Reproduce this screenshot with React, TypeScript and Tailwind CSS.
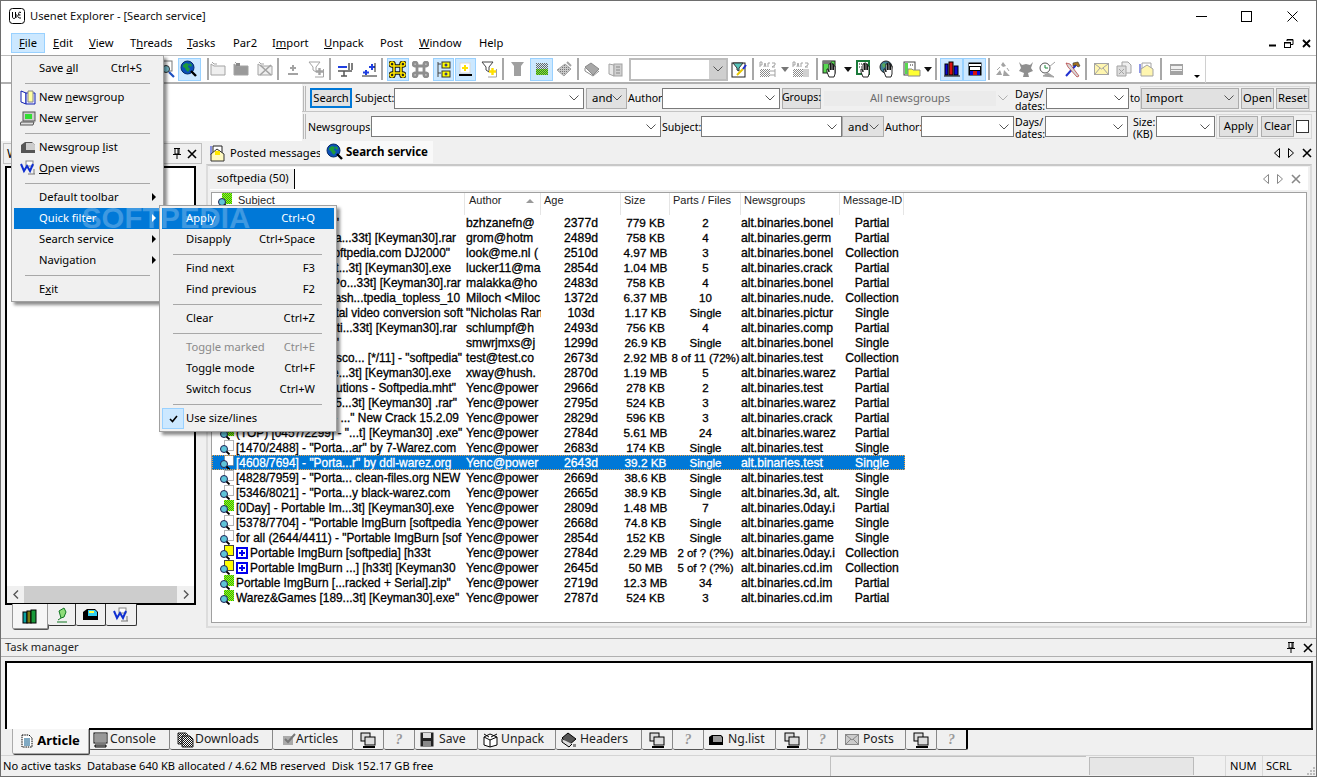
import React from "react";

const G = "#a3a3a3";
const S = ({ w = 16, h = 16, children, className = "" }: { w?: number; h?: number; children: React.ReactNode; className?: string }) => (
  <svg width={w} height={h} viewBox={`0 0 ${w} ${h}`} className={"shrink-0 block " + className} fill="none">{children}</svg>
);

const Globe = () => (
  <S w={18} h={18}>
    <circle cx="7.5" cy="7.5" r="6.5" fill="#0a50b8" stroke="#032a66" />
    <path d="M3 5l3-2 3 1-1 3 2 2-2 3-2-2-1-2-2-1zM10 3l2 2-1 2-2-2z" fill="#1c9a3c" />
    <path d="M11 11l5 5" stroke="#000" strokeWidth="2.4" />
  </S>
);
const DocSearch = () => (
  <S w={18} h={18}>
    <rect x="4" y="1" width="9" height="10" fill="#fff" stroke="#777" />
    <circle cx="7" cy="9" r="3.5" fill="#7cc6d8" stroke="#333" />
    <path d="M10 12l5 5" stroke="#1d4fc0" strokeWidth="2.2" />
  </S>
);
const Folder = ({ x }: { x?: "fill" | "cross" }) => (
  <S w={17} h={16}>
    <path d="M1 3l3 2h11v9H1z" fill={x === "fill" ? "#9a9a9a" : "#efefef"} stroke={G} />
    <path d="M2 1l2 2h3" stroke={G} />
    {x === "cross" && <path d="M3 4l11 10M14 4L3 14" stroke={G} strokeWidth="1.6" />}
    {x === "fill" && <rect x="3" y="2" width="4" height="3" fill="#888" />}
  </S>
);
const PlusLine = () => (
  <S w={12} h={12}><path d="M6 2v6M3 5h6" stroke={G} strokeWidth="2" /><path d="M1 11h10" stroke={G} strokeWidth="2" /></S>
);
const FunnelPlus = ({ c = G, p = G }: { c?: string; p?: string }) => (
  <S w={17} h={17}>
    <path d="M1 1h11L8 6v5L5 9V6z" fill="#fff" stroke={c === G ? G : "#444"} />
    <path d="M11.5 7v7M8 10.5h7" stroke={p} strokeWidth="2.4" />
    <path d="M15.5 8v8H7" stroke={G} />
  </S>
);
const Split = ({ plus }: { plus?: boolean }) => (
  <S w={17} h={17}>
    {plus ? (<>
      <path d="M5 9v5M2 11.5h6M11 3v6M8 6h6" stroke="#1f3fe0" strokeWidth="2" />
      <path d="M1 15h15M14 2v9" stroke="#222" />
    </>) : (<>
      <path d="M1 6h9" stroke="#1f3fe0" strokeWidth="2" />
      <path d="M1 10h14M12 2v7M15 2v7M7 10v5M4 15h6" stroke="#555" strokeWidth="1.5" />
    </>)}
  </S>
);
const Cmd = ({ on }: { on?: boolean }) => (
  <S w={17} h={17}>
    <path d="M5 5h7v7H5zM5 5V3.5A2 2 0 1 0 3.5 5H5M12 5V3.5A2 2 0 1 1 13.5 5H12M5 12v1.5A2 2 0 1 1 3.5 12H5M12 12v1.5A2 2 0 1 0 13.5 12H12" stroke={on ? "#111" : "#8e8e8e"} strokeWidth={on ? 3.4 : 2.8} />
    {on && <path d="M5 5h7v7H5zM5 5V3.5A2 2 0 1 0 3.5 5H5M12 5V3.5A2 2 0 1 1 13.5 5H12M5 12v1.5A2 2 0 1 1 3.5 12H5M12 12v1.5A2 2 0 1 0 13.5 12H12" stroke="#ffe600" strokeWidth="1.6" />}
  </S>
);
const Boxes = () => (
  <S w={14} h={17}>
    <path d="M1 1v15M1 3h3M1 12h3" stroke="#444" />
    <rect x="5" y="1" width="8" height="6" fill="#ffff00" stroke="#333" />
    <rect x="5" y="10" width="8" height="6" fill="#ffff00" stroke="#333" />
    <path d="M9 2.5v3M7.5 4h3M9 11.5v3M7.5 13h3" stroke="#000099" />
  </S>
);
const PlusDoc = () => (
  <S w={15} h={15}>
    <rect x="2" y="1" width="10" height="10" fill="#fff" stroke="#d8d8d8" />
    <path d="M7 3v6M4 6h6" stroke="#ffe000" strokeWidth="2" />
    <path d="M1 13h13" stroke="#000" strokeWidth="2" />
  </S>
);
const FunnelDoc = () => (
  <S w={15} h={16}><path d="M1 1h13l-3 4v10H4V5z" fill="#a0a0a0" /></S>
);
const DitherBox = () => (
  <S w={12} h={12}>
    <defs>
      <pattern id="gm" width="2" height="2" patternUnits="userSpaceOnUse"><rect width="2" height="2" fill="#9adf30" /><rect width="1" height="1" fill="#2a8a2a" /><rect x="1" y="1" width="1" height="1" fill="#2a8a2a" /></pattern>
      <pattern id="gk" width="2" height="2" patternUnits="userSpaceOnUse"><rect width="2" height="2" fill="#cfe8f8" /><rect width="1" height="1" fill="#666" /><rect x="1" y="1" width="1" height="1" fill="#666" /></pattern>
    </defs>
    <rect width="12" height="6" fill="url(#gk)" />
    <rect y="6" width="12" height="6" fill="url(#gm)" />
  </S>
);
const Pack = () => (
  <S w={17} h={16}>
    <defs><pattern id="dg" width="2" height="2" patternUnits="userSpaceOnUse"><rect width="2" height="2" fill="#c8c8c8" /><rect width="1" height="1" fill="#777" /></pattern></defs>
    <path d="M1 9l8-6 6 5-7 7z" fill="url(#dg)" stroke={G} /><path d="M11 1l4 4" stroke={G} strokeWidth="2" />
  </S>
);
const BookG = () => (
  <S w={16} h={15}><path d="M1 5l6-4 8 6-6 6z" fill="#a8a8a8" stroke="#8a8a8a" /><path d="M1 6v3l8 5 6-5" stroke="#8a8a8a" /></S>
);
const PagesG = () => (
  <S w={15} h={15}><path d="M1 2l5 1v11l-5-2z" fill="#e8e8e8" stroke={G} /><rect x="6" y="2" width="8" height="12" fill="#d0d0d0" stroke={G} /><path d="M8 5h4M8 8h4M8 11h4" stroke="#888" /></S>
);
const Edit = () => (
  <S w={17} h={17}>
    <rect x="1" y="2" width="13" height="14" fill="#fff" stroke="#222" />
    <path d="M2 2h10L8 7v3L6 9V7z" fill="#58c6bc" stroke="#333" />
    <path d="M6 14l6-6" stroke="#e8c800" strokeWidth="2" /><path d="M12 8l3-4" stroke="#2030d0" strokeWidth="2" />
  </S>
);
const Par = ({ alt }: { alt?: boolean }) => (
  <S w={18} h={17}>
    <defs><pattern id="dp" width="2" height="2" patternUnits="userSpaceOnUse"><rect width="1" height="1" fill="#8a8a8a" /><rect x="1" y="1" width="1" height="1" fill="#8a8a8a" /></pattern></defs>
    <path d="M1 6V1h2v3H1M5 6l1-4 1 4M9 6V2h2M13 2h3v2l-3 2h3" stroke={G} />
    <rect x="1" y="8" width="10" height="8" fill="url(#dp)" />
    {alt ? <path d="M12 8v8M14 8v8M16 8v8" stroke={G} /> : <path d="M11 10h5M11 14h5M16 8v8" stroke={G} />}
  </S>
);
const Caret = ({ c = "#555" }: { c?: string }) => (
  <S w={8} h={5}><path d="M0 0h8L4 5z" fill={c} /></S>
);
const Hand = ({ kind }: { kind: number }) => (
  <S w={18} h={18}>
    {kind === 0 && <><rect x="1" y="1" width="12" height="12" fill="#58d850" stroke="#222" /><rect x="1" y="1" width="8" height="3" fill="#777" /></>}
    {kind === 1 && <><rect x="1" y="1" width="12" height="13" fill="#fff" stroke="#1a7a3a" strokeWidth="2" /><path d="M3 4h8M3 7h4" stroke="#222" strokeDasharray="1 1" /></>}
    {kind === 2 && <><circle cx="7" cy="7" r="6" fill="#3f7f9a" stroke="#222" /><path d="M3 4l3-1 1 3-3 2z" fill="#58a85a" /></>}
    <path d="M7 17l-2-5V9l1 0 1 3V4h1.5v6V3h1.5v7V4h1.5v6V6h1.5v8l-1 3z" fill="#fff" stroke="#111" strokeWidth=".9" />
  </S>
);
const FilesY = () => (
  <S w={18} h={16}>
    <rect x="1" y="1" width="11" height="13" fill="#fff" stroke="#444" />
    <rect x="2" y="2" width="3" height="11" fill="#58d850" />
    <path d="M7 4h4" stroke="#222" strokeDasharray="1 1" />
    <path d="M5 8h4l1 1h7v6H5z" fill="#ffff33" stroke="#888" />
  </S>
);
const Bars = () => (
  <S w={16} h={16}>
    <rect x="1" y="3" width="3" height="11" fill="#0a0ad8" stroke="#000" /><rect x="5" y="1" width="4" height="13" fill="#d81010" stroke="#000" /><rect x="10" y="5" width="4" height="9" fill="#0a0ad8" stroke="#000" /><path d="M0 15h16" stroke="#000" />
  </S>
);
const Win = () => (
  <S w={14} h={14}>
    <rect x=".5" y=".5" width="13" height="13" fill="#000" />
    <rect x="1" y="2" width="12" height="2" fill="#fff" /><rect x="2" y="5" width="10" height="3" fill="#fff" />
    <rect x="2" y="9" width="10" height="4" fill="#0a0ad8" /><rect x="5" y="9" width="4" height="4" fill="#d81010" />
  </S>
);
const Grey1 = () => (<S w={18} h={17}><path d="M9 1l3 4-3 1-2-2zM2 14l4-5 2 5zM10 9l6 6H9z" fill={G} /><path d="M3 9l3-3M13 7l2 3" stroke={G} /></S>);
const Grey2 = () => (<S w={16} h={17}><path d="M1 1l3 3 4-1 4 1 3-3-2 6 2 3-5 2 1 4H5l1-4-5-2 2-3z" fill="#8f8f8f" /></S>);
const Clock = () => (<S w={18} h={17}><circle cx="6" cy="7" r="5" fill="#fff" stroke="#555" /><path d="M6 4v3h3" stroke="#1a8a3a" /><path d="M10 6l6-5M4 15l5-3 6 4z" fill={G} stroke={G} /></S>);
const Tools = () => (<S w={17} h={17}><path d="M2 15L12 4" stroke="#2030d0" strokeWidth="2" /><path d="M2 2l4 1 9 12-2 1L4 6z" fill="#d8d8d8" stroke="#b03030" strokeWidth=".7" /><path d="M9 2l5-1 2 4-2 1-2-2-3 1z" fill="#a07020" stroke="#333" strokeWidth=".6" /></S>);
const MailG = () => (<S w={15} h={12}><rect x=".5" y=".5" width="14" height="11" fill="#fff6b0" stroke={G} /><path d="M1 1l6.5 5L14 1M1 11l5-6M14 11L9 5" stroke={G} /></S>);
const DocsG = () => (<S w={16} h={16}><path d="M6 1h6l3 3v8H6z" fill="#eee" stroke={G} /><path d="M1 5h9v10H1z" fill="#ddd" stroke={G} /><path d="M3 8l5 5M8 8l-5 5" stroke={G} /></S>);
const PostG = () => (<S w={16} h={16}><path d="M1 3v9" stroke="#2030d0" /><path d="M3 2h9v6H3z" fill="#fff" stroke={G} /><path d="M2 8l6-4 6 4v7H2z" fill="#fff6b0" stroke={G} /></S>);
const WinG = () => (<S w={13} h={11}><rect width="13" height="11" fill={G} /><rect x="1" y="2" width="11" height="3" fill="#f0f0f0" /><rect x="1" y="6" width="11" height="1" fill="#f0f0f0" /></S>);

const Sep = () => <div className="w-[2px] bg-[#a8a8a8] h-[22px]" />;

function Chev({ c = "#555" }: { c?: string }) {
  return <svg width="10" height="6" viewBox="0 0 10 6" className="block shrink-0" fill="none"><path d="M.5.5L5 5 9.5.5" stroke={c} /></svg>;
}

type T = { c: number; w?: number; on?: boolean; el: React.ReactNode };
const tools: T[] = [
  { c: 168, el: <DocSearch /> }, { c: 189, w: 23, on: true, el: <Globe /> }, { c: 208, w: 2, el: <Sep /> },
  { c: 218, el: <Folder /> }, { c: 241, el: <Folder x="fill" /> }, { c: 265, el: <Folder x="cross" /> }, { c: 278, w: 2, el: <Sep /> },
  { c: 293, el: <PlusLine /> }, { c: 316, el: <FunnelPlus /> }, { c: 330, w: 2, el: <Sep /> },
  { c: 345, el: <Split /> }, { c: 369, el: <Split plus /> }, { c: 382, w: 2, el: <Sep /> },
  { c: 397.5, w: 22, on: true, el: <Cmd on /> }, { c: 420, el: <Cmd /> }, { c: 443.5, w: 21, on: true, el: <Boxes /> }, { c: 465.5, w: 21, on: true, el: <PlusDoc /> },
  { c: 489, el: <FunnelPlus c="#333" p="#ffe000" /> }, { c: 503, w: 2, el: <Sep /> },
  { c: 517, el: <FunnelDoc /> }, { c: 541.5, w: 23, on: true, el: <DitherBox /> }, { c: 564, el: <Pack /> }, { c: 578, w: 2, el: <Sep /> },
  { c: 592, el: <BookG /> }, { c: 615, el: <PagesG /> },
  { c: 678.5, w: 99, el: (
    <div className="w-[99px] h-[23px] flex border-2 border-[#bdbdbd] bg-white items-stretch box-border">
      <div className="flex-1" />
      <div className="w-[17px] bg-[#cfcfcf] flex items-center justify-center"><Chev /></div>
    </div>
  ) },
  { c: 739, el: <Edit /> }, { c: 753, w: 2, el: <Sep /> },
  { c: 768, el: <Par /> }, { c: 785, w: 8, el: <Caret c="#777" /> }, { c: 801, el: <Par alt /> }, { c: 817, w: 2, el: <Sep /> },
  { c: 831, el: <Hand kind={0} /> }, { c: 847.5, w: 8, el: <Caret c="#111" /> }, { c: 865, el: <Hand kind={1} /> },
  { c: 888, el: <Hand kind={2} /> }, { c: 912, el: <FilesY /> }, { c: 927.5, w: 8, el: <Caret c="#111" /> }, { c: 936, w: 2, el: <Sep /> },
  { c: 951.5, w: 23, on: true, el: <Bars /> }, { c: 974.5, w: 23, on: true, el: <Win /> }, { c: 989, w: 2, el: <Sep /> },
  { c: 1003, el: <Grey1 /> }, { c: 1026, el: <Grey2 /> }, { c: 1048, el: <Clock /> }, { c: 1072, el: <Tools /> }, { c: 1086, w: 2, el: <Sep /> },
  { c: 1101, el: <MailG /> }, { c: 1124, el: <DocsG /> }, { c: 1147, el: <PostG /> }, { c: 1161, w: 2, el: <Sep /> },
  { c: 1176, el: <WinG /> },
];

function Toolbar() {
  let end = 1;
  return (
    <div className="h-[29px] shrink-0 border-t border-b-2 border-t-[#bdbdbd] border-b-[#b0b0b0] bg-white flex items-center">
      {tools.map((t, i) => {
        const w = t.w ?? 20;
        const left = t.c - w / 2;
        const m = left - end;
        end = left + w;
        return (
          <div key={i} style={{ marginLeft: m, width: w }} className={"h-[23px] shrink-0 flex items-center justify-center box-border " + (t.on ? "bg-[#cce8ff] border border-[#99d1ff]" : "")}>
            {t.el}
          </div>
        );
      })}
      <div className="ml-[8px] w-[8px] h-[23px] flex items-end pb-[3px]"><div className="w-0 h-0 border-x-[3px] border-x-transparent border-t-[3px] border-t-black" /></div>
      <div className="ml-[3px] w-px h-[27px] bg-[#d0d0d0]" />
    </div>
  );
}

const Combo = ({ w, children, grey }: { w: string; children?: React.ReactNode; grey?: boolean }) => (
  <div className={w + " h-[21px] shrink-0 box-border border flex items-center justify-between pl-[3px] pr-[4px] text-[11.4px] " + (grey ? "bg-[#e1e1e1] border-[#adadad]" : "bg-white border-[#7a7a7a]")}>
    <span className="whitespace-nowrap">{children}</span><Chev />
  </div>
);
const Btn = ({ w, children }: { w: string; children: React.ReactNode }) => (
  <div className={w + " h-[21px] shrink-0 box-border border border-[#adadad] bg-[#e1e1e1] flex items-center justify-center text-[11.2px]"}>{children}</div>
);
const Lab = ({ w, children }: { w: string; children: React.ReactNode }) => (
  <div className={w + " shrink-0 text-[10.6px] leading-[12px] text-black whitespace-nowrap"}>{children}</div>
);
const Two = ({ w, a, b }: { w: string; a: string; b: string }) => (
  <div className={w + " shrink-0 mt-[3px] text-[10.6px] leading-[12px] text-black whitespace-nowrap flex flex-col"}><span>{a}</span><span>{b}</span></div>
);
const Grip = () => <div className="w-[3px] h-[25px] mx-[1px] border-l border-r border-[#b8b8b8] shrink-0" />;

function SearchBars() {
  return (
    <div className="h-[57px] shrink-0 flex bg-[#f0f0f0]">
      <div className="w-[301px] bg-white shrink-0" />
      <div className="flex-1 flex flex-col">
        <div className="h-[28px] flex items-center border-b border-[#c4c4c4] pt-[1px]">
          <Grip />
          <div className="ml-[3px] w-[42px] h-[20px] shrink-0 box-border border-2 border-[#0078d7] bg-[#e1e1e1] flex items-center justify-center text-[11.2px]">Search</div>
          <div className="w-[3px]" />
          <Lab w="w-[39px]">Subject:</Lab>
          <Combo w="w-[190px]" />
          <div className="w-[2px]" />
          <Combo w="w-[41px]" grey><span className="pl-[2px]">and</span></Combo>
          <div className="w-[1px]" />
          <Lab w="w-[33px]">Author:</Lab>
          <div className="w-[1px]" />
          <Combo w="w-[118px]" />
          <div className="w-[2px]" />
          <Btn w="w-[39px]"><span className="text-[10.6px]">Groups:</span></Btn>
          <div className="w-[1px]" />
          <div className="w-[192px] h-[21px] shrink-0 flex items-center text-[#6d6d6d] text-[11.2px] pr-[6px] pl-[2px]">
            <div className="w-[172px] h-[15px] bg-[#ebebeb] flex items-center justify-center">All newsgroups</div>
            <div className="ml-auto"><Chev c="#b0b0b0" /></div>
          </div>
          <div className="w-[1px]" />
          <Two w="w-[31px]" a="Days/" b="dates:" />
          <Combo w="w-[83px]" />
          <div className="w-[1px]" />
          <Lab w="w-[10px]">to</Lab>
          <div className="h-[25px] flex items-center gap-[2px] border border-[#d8d8d8]">
            <Combo w="w-[98px]" grey><span className="pl-[1px]">Import</span></Combo>
            <Btn w="w-[33px]">Open</Btn>
            <Btn w="w-[33px]">Reset</Btn>
          </div>
        </div>
        <div className="h-[29px] flex items-center">
          <Grip />
          <div className="w-[1px]" />
          <Lab w="w-[63px]">Newsgroups:</Lab>
          <Combo w="w-[290px]" />
          <div className="w-[1px]" />
          <Lab w="w-[38px]">Subject:</Lab>
          <div className="w-[1px]" />
          <Combo w="w-[141px]" />
          <Combo w="w-[42px]" grey><span className="pl-[2px]">and</span></Combo>
          <div className="w-[1px]" />
          <Lab w="w-[34px]">Author:</Lab>
          <div className="w-[2px]" />
          <Combo w="w-[93px]" />
          <div className="w-[1px]" />
          <Two w="w-[30px]" a="Days/" b="dates:" />
          <Combo w="w-[83px]" />
          <div className="w-[5px]" />
          <Two w="w-[23px]" a="Size:" b="(KB)" />
          <Combo w="w-[59px]" />
          <div className="ml-[1px] h-[25px] flex items-center border border-[#d8d8d8] pl-[2px]">
            <Btn w="w-[39px]">Apply</Btn>
            <div className="w-[3px]" />
            <Btn w="w-[33px]">Clear</Btn>
            <div className="w-[2px]" />
            <div className="w-[13px] h-[13px] bg-white border border-[#333] mr-[2px]" />
          </div>
        </div>
      </div>
    </div>
  );
}

const Pin = () => <S w={10} h={11}><path d="M2 .5h6M3 1v5h4V1M1 6.5h8M5 7v4" stroke="#000" /><path d="M6 1v5" stroke="#000" /></S>;
const XIc = ({ c = "#000" }: { c?: string }) => <S w={10} h={10}><path d="M1 1l8 8M9 1L1 9" stroke={c} strokeWidth="1.6" /></S>;
const Tri = ({ r, c = "#000" }: { r?: boolean; c?: string }) => <S w={6} h={10}><path d={r ? "M.5 .5L5.5 5 .5 9.5z" : "M5.5 .5L.5 5l5 4.5z"} stroke={c} /></S>;

function BooksIc() { return <S w={16} h={15}><rect x="1" y="3" width="4" height="11" fill="#0aa0a0" stroke="#000" /><rect x="5" y="2" width="4" height="12" fill="#7a7a10" stroke="#000" /><rect x="9" y="1" width="5" height="13" fill="#1a9a3a" stroke="#000" /></S>; }
function ServerTab() { return <S w={14} h={16}><path d="M2 15h10M3 13l3-2M4 4l5-3 2 4-2 5-3 1z" stroke="#117722" fill="#8fdc7a" /></S>; }
function BoxTab() { return <S w={17} h={13}><path d="M1 4l4-3h8l3 3v8H1z" fill="#000" /><path d="M6 2h7l2 2v4H6z" fill="#33ccee" /><path d="M7 3h5v2H7z" fill="#ffff44" /></S>; }
function ViewsTab() { return <S w={16} h={16}><rect x="6" y="1" width="7" height="5" fill="#fff" stroke="#888" /><path d="M1 4l3 7 3-5 3 5 3-7" stroke="#1030d0" strokeWidth="2" /><path d="M8 14h7M14 9v5" stroke="#777" /></S>; }

const Posted = () => (
  <S w={17} h={17}>
    <path d="M2 1v9" stroke="#2030d0" /><path d="M4 1h9v8H4z" fill="#fff" stroke="#222" />
    <path d="M2 9l6-5 7 5v7H2z" fill="#fffac0" stroke="#333" /><path d="M6 6h5v4H6z" fill="#ffe800" />
  </S>
);

const NewNg = () => (<S w={16} h={16}><path d="M1 2l5 2v11l-5-2z" fill="#fff" stroke="#1020b0" /><path d="M6 4h9v11H6z" fill="#e8e8ff" stroke="#1020b0" /><path d="M8 2h5v11H8z" fill="#ffffa0" stroke="#888" /></S>);
const NewSrv = () => (<S w={16} h={15}><rect x="3" y="1" width="12" height="9" fill="#ccc" stroke="#555" /><rect x="5" y="3" width="7" height="5" fill="#33dd33" /><path d="M1 11h13l-1 3H0z" fill="#ddd" stroke="#555" /></S>);
const NgList = () => (<S w={16} h={13}><path d="M1 4l4-3h7l3 3v8H1z" fill="#555" /><path d="M6 2h7l2 2v5H6z" fill="#ccc" /></S>);

function U({ a, u, b }: { a?: string; u: string; b?: string }) { return <span>{a}<u>{u}</u>{b}</span>; }

const MSep = ({ cls }: { cls: string }) => <div className={"h-[8px] flex items-center " + cls}><div className="h-px w-full bg-[#a8a8a8]" /></div>;

function FileMenu() {
  const I = ({ l, icon, sc, ar, sel }: { l: React.ReactNode; icon?: React.ReactNode; sc?: string; ar?: boolean; sel?: boolean }) => (
    <div className={"h-[21px] pb-[1px] flex items-center relative mx-[2px] " + (sel ? "bg-[#0078d7] text-white" : "text-black")}>
      <div className="w-[25px] flex justify-center shrink-0 pl-[2px]">{icon}</div>
      <span>{l}</span>
      {sc && <span className="ml-auto mr-[19px]">{sc}</span>}
      {ar && <div className={"ml-auto mr-[5px] w-0 h-0 border-y-[4px] border-y-transparent border-l-[4px] " + (sel ? "border-l-white" : "border-l-black")} />}
    </div>
  );
  return (
    <div className="absolute left-[10px] top-[54px] w-[153px] h-[247px] box-border bg-[#f0f0f0] border border-[#a0a0a0] shadow-[3px_3px_3px_rgba(0,0,0,0.45)] pt-[2px] text-[11.2px] z-20">
      <I l={<U a="Save " u="a" b="ll" />} sc="Ctrl+S" />
      <MSep cls="ml-[13px] mr-[13px]" />
      <I icon={<NewNg />} l={<U a="New " u="n" b="ewsgroup" />} />
      <I icon={<NewSrv />} l={<U a="New " u="s" b="erver" />} />
      <MSep cls="ml-[13px] mr-[13px]" />
      <I icon={<NgList />} l={<U a="Newsgroup " u="l" b="ist" />} />
      <I icon={<ViewsTab />} l={<U u="O" b="pen views" />} />
      <MSep cls="ml-[13px] mr-[13px]" />
      <I l="Default toolbar" ar />
      <I l="Quick filter" ar sel />
      <I l="Search service" ar />
      <I l="Navigation" ar />
      <MSep cls="ml-[13px] mr-[13px]" />
      <I l={<U a="E" u="x" b="it" />} />
    </div>
  );
}

function SubMenu() {
  const I = ({ l, sc, sel, dis, chk }: { l: string; sc?: string; sel?: boolean; dis?: boolean; chk?: boolean }) => (
    <div className={"h-[21px] flex items-center mx-[2px] " + (sel ? "bg-[#0078d7] text-white" : dis ? "text-[#8a8a8a]" : "text-black")}>
      <div className={"w-[22px] h-[21px] mr-[2px] shrink-0 flex items-center justify-center box-border " + (chk ? "bg-[#cce8ff] border border-[#99d1ff]" : "")}>
        {chk && <S w={9} h={8}><path d="M1 4l2.5 2.5L8 1" stroke="#000" strokeWidth="1.6" /></S>}
      </div>
      <span className="pb-[1px]">{l}</span>
      {sc && <span className="ml-auto mr-[19px] pb-[1px]">{sc}</span>}
    </div>
  );
  const M = () => <MSep cls="ml-[13px] mr-[14px]" />;
  return (
    <div className="absolute left-[158px] top-[204px] w-[178px] h-[227px] box-border bg-[#f0f0f0] border border-[#a0a0a0] shadow-[3px_3px_3px_rgba(0,0,0,0.45)] pt-[2px] text-[11.2px] z-30">
      <I l="Apply" sc="Ctrl+Q" sel />
      <I l="Disapply" sc="Ctrl+Space" />
      <M />
      <I l="Find next" sc="F3" />
      <I l="Find previous" sc="F2" />
      <M />
      <I l="Clear" sc="Ctrl+Z" />
      <M />
      <I l="Toggle marked" sc="Ctrl+E" dis />
      <I l="Toggle mode" sc="Ctrl+F" />
      <I l="Switch focus" sc="Ctrl+W" />
      <M />
      <I l="Use size/lines" chk />
    </div>
  );
}

type R = { k: "g" | "b" | "y"; s: string; end?: number; plus?: boolean; a: string; d: string; z: string; p: string; n: string; m: string };
const Y = "Yenc@power";
const rows: R[] = [
  { k: "g", s: '"', end: 339, a: "bzhzanefn@", d: "2377d", z: "779 KB", p: "2", n: "alt.binaries.bonel", m: "Partial" },
  { k: "g", s: "[Keyman30] Alpha...33t] [Keyman30].rar", end: 456, a: "grom@hotm", d: "2489d", z: "758 KB", p: "4", n: "alt.binaries.germ", m: "Partial" },
  { k: "g", s: "Promo by www.softpedia.com DJ2000\"", end: 450, a: "look@me.nl (", d: "2510d", z: "4.97 MB", p: "3", n: "alt.binaries.bonel", m: "Collection" },
  { k: "g", s: "Portable Soft...3t] [Keyman30].exe", end: 451, a: "lucker11@ma", d: "2854d", z: "1.04 MB", p: "5", n: "alt.binaries.crack", m: "Partial" },
  { k: "g", s: "Video Po...33t] [Keyman30].rar", end: 461, a: "malakka@ho", d: "2483d", z: "758 KB", p: "4", n: "alt.binaries.bonel", m: "Partial" },
  { k: "g", s: "Flash...tpedia_topless_10", end: 460, a: "Miloch <Miloc", d: "1372d", z: "6.37 MB", p: "10", n: "alt.binaries.nude.", m: "Collection" },
  { k: "g", s: "Total video conversion soft", end: 463, a: '"Nicholas Ran', d: "103d", z: "1.17 KB", p: "Single", n: "alt.binaries.pictur", m: "Single" },
  { k: "g", s: "Multi...33t] [Keyman30].rar", end: 457, a: "schlumpf@h", d: "2493d", z: "756 KB", p: "4", n: "alt.binaries.comp", m: "Partial" },
  { k: "g", s: '"', end: 339, a: "smwrjmxs@j", d: "1299d", z: "26.9 KB", p: "Single", n: "alt.binaries.bonel", m: "Single" },
  { k: "g", s: 'Disco... [*/11] - "softpedia"', end: 462, a: "test@test.co", d: "2673d", z: "2.92 MB", p: "8 of 11 (72%)", n: "alt.binaries.test", m: "Collection" },
  { k: "g", s: "Portable...3t] [Keyman30].exe", end: 451, a: "xway@hush.", d: "2870d", z: "1.19 MB", p: "5", n: "alt.binaries.warez", m: "Partial" },
  { k: "g", s: 'Solutions - Softpedia.mht"', end: 456, a: Y, d: "2966d", z: "278 KB", p: "2", n: "alt.binaries.test", m: "Partial" },
  { k: "g", s: '[0125...3t] [Keyman30] .rar"', end: 457, a: Y, d: "2795d", z: "524 KB", p: "3", n: "alt.binaries.warez", m: "Partial" },
  { k: "g", s: '[TOP] - ..." New Crack 15.2.09', end: 459, a: Y, d: "2829d", z: "596 KB", p: "3", n: "alt.binaries.crack", m: "Partial" },
  { k: "g", s: '(TOP) [0457/2299] - "...t] [Keyman30] .exe"', a: Y, d: "2784d", z: "5.61 MB", p: "24", n: "alt.binaries.warez", m: "Partial" },
  { k: "b", s: '[1470/2488] - "Porta...ar" by 7-Warez.com', a: Y, d: "2683d", z: "174 KB", p: "Single", n: "alt.binaries.test", m: "Single" },
  { k: "b", s: '[4608/7694] - "Porta...r" by ddl-warez.org', a: Y, d: "2643d", z: "39.2 KB", p: "Single", n: "alt.binaries.test", m: "Single" },
  { k: "b", s: '[4828/7959] - "Porta... clean-files.org NEW', a: Y, d: "2669d", z: "38.6 KB", p: "Single", n: "alt.binaries.test", m: "Single" },
  { k: "b", s: '[5346/8021] - "Porta...y black-warez.com', a: Y, d: "2665d", z: "38.9 KB", p: "Single", n: "alt.binaries.3d, alt.", m: "Single" },
  { k: "g", s: "[0Day] - Portable Im...3t] [Keyman30].exe", a: Y, d: "2809d", z: "1.48 MB", p: "7", n: "alt.binaries.0day.i", m: "Partial" },
  { k: "b", s: '[5378/7704] - "Portable ImgBurn [softpedia', a: Y, d: "2668d", z: "74.8 KB", p: "Single", n: "alt.binaries.game", m: "Single" },
  { k: "b", s: 'for all (2644/4411) - "Portable ImgBurn [sof', a: Y, d: "2854d", z: "152 KB", p: "Single", n: "alt.binaries.game", m: "Single" },
  { k: "y", plus: true, s: "Portable ImgBurn [softpedia] [h33t", a: Y, d: "2784d", z: "2.29 MB", p: "2 of ? (?%)", n: "alt.binaries.0day.i", m: "Collection" },
  { k: "y", plus: true, s: "Portable ImgBurn ...] [h33t] [Keyman30", a: Y, d: "2645d", z: "50 MB", p: "5 of ? (?%)", n: "alt.binaries.cd.im", m: "Collection" },
  { k: "g", s: 'Portable ImgBurn [...racked + Serial].zip"', a: Y, d: "2719d", z: "12.3 MB", p: "34", n: "alt.binaries.cd.im", m: "Partial" },
  { k: "g", s: 'Warez&Games [189...3t] [Keyman30].exe"', a: Y, d: "2787d", z: "524 KB", p: "3", n: "alt.binaries.cd.im", m: "Partial" },
];

function RowIcon({ k }: { k: "g" | "b" | "y" }) {
  return (
    <S w={16} h={15}>
      <defs><pattern id="chk" width="2" height="2" patternUnits="userSpaceOnUse"><rect width="2" height="2" fill="#aaff00" /><rect width="1" height="1" fill="#22aa22" /><rect x="1" y="1" width="1" height="1" fill="#22aa22" /></pattern></defs>
      {k === "b" && <rect x="5.5" y=".5" width="9" height="10" fill="#fff" stroke="#666" strokeDasharray="1 1" />}
      {k === "g" && <rect x="5" y="0" width="10" height="11" fill="url(#chk)" />}
      {k === "y" && <rect x="5.5" y=".5" width="9" height="10" fill="#ffff00" stroke="#444" />}
      <circle cx="5" cy="9" r="3.5" fill="#5fc4d8" stroke="#225" />
      <path d="M7.5 11.5l3 3" stroke="#000" strokeWidth="1.8" />
    </S>
  );
}

const PlusBox = () => <S w={12} h={12}><rect x="1" y="1" width="10" height="10" fill="#fff" stroke="#0000ee" strokeWidth="2" /><path d="M6 3v6M3 6h6" stroke="#0000ee" strokeWidth="2" /></S>;

function Row({ r, sel }: { r: R; sel?: boolean }) {
  const subj = r.end ? (
    <div className="w-[229px] shrink-0 overflow-hidden flex justify-end text-[11.9px]" style={{ paddingRight: 465 - r.end }}><span className="whitespace-nowrap">{r.s}</span></div>
  ) : (
    <div className="w-[229px] shrink-0 overflow-hidden flex items-center whitespace-nowrap text-[11.9px]">
      {r.plus && <span className="mr-[2px]"><PlusBox /></span>}
      <span>{r.s}</span>
    </div>
  );
  return (
    <div className={"w-[693px] h-[15px] box-border flex items-center leading-[14px] " + (sel ? "bg-[#0078d7] text-white outline-1 outline-dotted outline-offset-[-1px] outline-[#f0a040]" : "text-black")}>
      <div className="w-[24px] shrink-0 pl-[7px]"><RowIcon k={r.k} /></div>
      {subj}
      <div className="w-[76px] shrink-0 overflow-hidden whitespace-nowrap pl-[1px]">{r.a}</div>
      <div className="w-[80px] shrink-0 text-center">{r.d}</div>
      <div className="w-[49px] shrink-0 text-center whitespace-nowrap text-[11.8px]">{r.z}</div>
      <div className="w-[71px] shrink-0 text-center whitespace-nowrap text-[11.5px]">{r.p}</div>
      <div className="w-[99px] shrink-0 overflow-hidden whitespace-nowrap">{r.n}</div>
      <div className="w-[64px] shrink-0 text-center">{r.m}</div>
    </div>
  );
}

function Head({ w, children }: { w: string; children: React.ReactNode }) {
  return <div className={w + " h-[22px] pb-[7px] shrink-0 box-border border-r border-[#e5e5e5] flex items-center pl-[3px] text-[11px]"}>{children}</div>;
}

function ListPanel() {
  return (
    <div className="flex-1 min-h-0 mx-[3px] mb-[3px] box-border border border-[#a0a0a0] bg-white overflow-hidden">
      <div className="h-[22px] flex items-start font-['Liberation_Sans',Arial,sans-serif] text-[#222]">
        <Head w="w-[253px]"><span className="ml-[2px] mr-[5px]"><RowIcon k="g" /></span><span>Subject</span></Head>
        <Head w="w-[76px]"><span className="ml-[1px]">Author</span><span className="ml-auto mr-[6px] w-0 h-0 border-x-[4px] border-x-transparent border-b-[4px] border-b-[#999]" /></Head>
        <Head w="w-[80px]">Age</Head>
        <Head w="w-[49px]">Size</Head>
        <Head w="w-[71px]">Parts / Files</Head>
        <Head w="w-[99px]">Newsgroups</Head>
        <Head w="w-[64px]">Message-ID</Head>
      </div>
      <div className="font-['Liberation_Sans',Arial,sans-serif] text-[12.2px] [-webkit-text-stroke:0.3px_currentColor]">
        {rows.map((r, i) => <Row key={i} r={r} sel={i === 16} />)}
      </div>
    </div>
  );
}

function LeftPanel() {
  return (
    <div className="w-[199px] ml-[2px] shrink-0 flex flex-col">
      <div className="h-[21px] mt-[2px] border border-[#c0c0c0] flex items-center text-[12px] pl-[1px]">
        <span className="pl-[2px]">W</span>
        <span className="ml-auto mr-[5px]"><Pin /></span>
        <span className="mr-[4px]"><XIc /></span>
      </div>
      <div className="h-[439px] mt-[2px] ml-[2px] mr-[6px] border-2 border-black bg-white flex flex-col justify-end box-border">
        <div className="h-[17px] bg-[#f0f0f0] flex items-center">
          <div className="w-[17px] flex justify-center"><S w={6} h={9}><path d="M5 .5L1 4.5 5 8.5" stroke="#555" strokeWidth="1.4" /></S></div>
          <div className="flex-1 h-[17px] bg-[#cdcdcd]" />
          <div className="w-[17px] flex justify-center"><S w={6} h={9}><path d="M1 .5L5 4.5 1 8.5" stroke="#555" strokeWidth="1.4" /></S></div>
        </div>
      </div>
      <div className="flex ml-[9px] -mt-[1px] items-start relative">
        <div className="w-[36px] h-[25px] bg-[#f6f6f6] border-x border-b border-[#999] rounded-b-[2px] flex items-center justify-center shadow-[1px_1px_0_#555]"><BooksIc /></div>
        <div className="w-[28px] h-[22px] bg-[#f0f0f0] border-r border-b border-[#333] rounded-b-[2px] flex items-center justify-center"><ServerTab /></div>
        <div className="w-[30px] h-[22px] bg-[#f0f0f0] border-r border-b border-[#333] rounded-b-[2px] flex items-center justify-center"><BoxTab /></div>
        <div className="w-[31px] h-[22px] bg-[#f0f0f0] border-r border-b border-[#333] rounded-b-[2px] flex items-center justify-center"><ViewsTab /></div>
      </div>
    </div>
  );
}

function RightPanel() {
  return (
    <div className="flex-1 flex flex-col min-w-0 ml-[4px]">
      <div className="h-[22px] shrink-0 flex items-end text-[11.2px]">
        <div className="h-[20px] w-[114px] flex items-center pl-[3px] whitespace-nowrap"><Posted /><span className="ml-[4px]">Posted messages</span></div>
        <div className="h-[22px] w-[113px] bg-[#f9f9f9] flex items-center pl-[6px] font-bold whitespace-nowrap"><Globe /><span className="ml-[2px] text-[11.5px]">Search service</span></div>
        <div className="ml-auto flex items-center gap-[8px] h-[20px] mr-[4px]"><Tri /><Tri r /><XIc /></div>
      </div>
      <div className="h-[464px] mt-[1px] mr-[4px] border-2 border-[#dcdcdc] bg-[#f0f0f0] flex flex-col border-t-[#c8c8c8]">
        <div className="h-[23px] shrink-0 bg-white mx-[2px] mt-[1px] flex items-center">
          <div className="ml-0 h-[20px] w-[85px] border-r border-black bg-[#f0f0f0] flex items-center pl-[7px] whitespace-nowrap">softpedia (50)</div>
          <div className="ml-auto flex items-center gap-[8px] mr-[7px]"><Tri c="#888" /><Tri r c="#888" /><XIc c="#888" /></div>
        </div>
        <div className="h-[2px] shrink-0" />
        <ListPanel />
      </div>
    </div>
  );
}

const TB = ({ w, children, on, pl = "justify-center" }: { w: string; children: React.ReactNode; on?: boolean; pl?: string }) => (
  <div className={w + " " + pl + " shrink-0 box-border flex items-center " + (on ? "gap-[4px] h-[25px] bg-[#f6f6f6] font-bold text-black border-x border-b border-[#aaa] shadow-[1px_1px_0_#444] rounded-b-[2px] relative" : "h-[20px] border-r border-b border-r-[#888] border-b-[#555] rounded-b-[2px] text-[#222]")}>{children}</div>
);
const Dual = () => <S w={16} h={16}><rect x="1" y="1" width="9" height="8" fill="#ddd" stroke="#000" /><rect x="5" y="5" width="10" height="8" fill="#ddd" stroke="#000" /><path d="M3 15h12" stroke="#000" strokeWidth="2" /></S>;
const Q = () => <span className="italic font-bold text-[#999] text-[14px] font-['Liberation_Serif',serif] leading-none">?</span>;
const DocI = () => <S w={12} h={14}><path d="M1 1h7l3 3v9H1z" fill="#fff" stroke="#000" strokeDasharray="1.5 .8" /><path d="M3 5h6M3 7h6M3 9h6M3 11h6" stroke="#058" /></S>;
const Mon = () => <S w={17} h={16}><rect x="2" y="1" width="13" height="10" fill="#fff" stroke="#000" /><rect x="3" y="2" width="11" height="8" fill="#999" /><path d="M3 13h11v2H3z" fill="#bbb" stroke="#000" /></S>;
const Stack = () => <S w={17} h={16}><defs><pattern id="st" width="2" height="2" patternUnits="userSpaceOnUse"><rect width="2" height="2" fill="#fff" /><rect width="1" height="1" fill="#111" /><rect x="1" y="1" width="1" height="1" fill="#111" /></pattern></defs><path d="M1 1h8l2 2v9H1z" fill="url(#st)" stroke="#222" /><path d="M5 4h8l3 3v8H5z" fill="url(#st)" stroke="#222" /></S>;
const ChkI = () => <S w={14} h={13}><rect x="1" y="3" width="10" height="9" fill="#aaa" /><path d="M3 6l3 3 7-8" stroke="#777" strokeWidth="2" /></S>;
const Floppy = () => <S w={14} h={15}><rect x=".5" y=".5" width="13" height="14" fill="#222" /><rect x="3" y="1" width="8" height="5" fill="#ddd" /><rect x="3" y="9" width="8" height="5" fill="#888" /></S>;
const BoxI = () => <S w={15} h={16}><path d="M1 5l6-3 7 3v8l-7 2-6-2z" fill="#fff" stroke="#000" /><path d="M1 5l6 3 7-3M7 8v7M1 2l5 3M14 2L8 5" stroke="#000" /></S>;
const BookI = () => <S w={16} h={16}><path d="M1 6l6-5 8 6-7 6z" fill="#555" stroke="#000" /><path d="M1 7v3l7 5 3-3" stroke="#000" fill="#ddd" /><path d="M12 12h3v3h-3z" fill="#888" /></S>;
const BoxB = () => <S w={16} h={12}><path d="M1 3l3-2h9l2 2v8H1z" fill="#000" /><path d="M5 2h8l1 2v4H5z" fill="#999" /></S>;
const Env = () => <S w={14} h={11}><rect x=".5" y=".5" width="13" height="10" fill="#ccc" stroke="#888" /><path d="M1 1l6 5 6-5M1 10l5-5M13 10L8 5" stroke="#888" /></S>;

function BottomTabs() {
  return (
    <div className="h-[25px] shrink-0 flex items-start pl-[11px] text-[12.2px]">
      <TB w="w-[77px]" on><DocI /><span className="text-[13px]">Article</span></TB>
      <div className="flex-1 flex items-start border-t-2 border-black -mt-px h-[24px] mr-[3px] whitespace-nowrap">
        <TB w="w-[81px]" pl="pl-[3px]"><Mon /><span className="ml-[1px]">Console</span></TB>
        <TB w="w-[103px]" pl="pl-[7px]"><Stack /><span className="ml-[1px]">Downloads</span></TB>
        <TB w="w-[80px]" pl="pl-[9px]"><ChkI /><span>Articles</span></TB>
        <TB w="w-[31px]"><Dual /></TB>
        <TB w="w-[31px]"><Q /></TB>
        <TB w="w-[63px]" pl="pl-[5px]"><Floppy /><span className="ml-[5px]">Save</span></TB>
        <TB w="w-[78px]" pl="pl-[5px]"><BoxI /><span className="ml-[3px]">Unpack</span></TB>
        <TB w="w-[86px]" pl="pl-[5px]"><BookI /><span className="ml-[3px]">Headers</span></TB>
        <TB w="w-[31px]"><Dual /></TB>
        <TB w="w-[31px]"><Q /></TB>
        <TB w="w-[72px]" pl="pl-[4px]"><BoxB /><span className="ml-[4px]">Ng.list</span></TB>
        <TB w="w-[32px]"><Dual /></TB>
        <TB w="w-[30px]"><Q /></TB>
        <TB w="w-[68px]" pl="pl-[7px]"><Env /><span className="ml-[4px]">Posts</span></TB>
        <TB w="w-[31px]"><Dual /></TB>
        <div className="w-[31px] h-[20px] border-r-2 border-b border-r-black border-b-[#555] rounded-b-[2px] flex items-center justify-center"><Q /></div>
      </div>
    </div>
  );
}

export default function App() {
  return (
    <div className="relative w-[1317px] h-[777px] overflow-hidden box-border border border-[#6e6e6e] bg-[#f0f0f0] flex flex-col font-['Noto_Sans',sans-serif] text-[11.2px] text-black">
      <div className="h-[30px] shrink-0 bg-white flex items-center pl-[8px]">
        <S w={17} h={17}>
          <rect x=".5" y=".5" width="15" height="15" rx="3" fill="#fff" stroke="#000" />
          <path d="M3.5 4v5c0 2 3 2 3 0V4M7 10V6M12 4.5c-2-1-3 .5-2 2-2 0-2 4 2 3.5M9.5 7h2" stroke="#000" />
        </S>
        <span className="ml-[4px] text-[#111]">Usenet Explorer - [Search service]</span>
        <div className="ml-auto flex items-center">
          <S w={11} h={11} className="mr-[34px]"><path d="M0 5.5h11" stroke="#000" /></S>
          <S w={11} h={11} className="mr-[35px]"><rect x=".5" y=".5" width="10" height="10" stroke="#000" /></S>
          <S w={11} h={11} className="mr-[18px]"><path d="M.5.5l10 10M10.5.5l-10 10" stroke="#000" /></S>
        </div>
      </div>
      <div className="h-[24px] shrink-0 bg-white flex items-center relative">
        <div className="ml-[10px] w-[34px] h-[20px] box-border bg-[#cce8ff] border border-[#99d1ff] flex items-center justify-center"><U u="F" b="ile" /></div>
        <div className="ml-[8px] w-[36px]"><U u="E" b="dit" /></div>
        <div className="w-[41px]"><U u="V" b="iew" /></div>
        <div className="w-[57px]"><U a="T" u="h" b="reads" /></div>
        <div className="w-[46px]"><U u="T" b="asks" /></div>
        <div className="w-[39px]">Par2</div>
        <div className="w-[52px]"><U a="I" u="m" b="port" /></div>
        <div className="w-[56px]"><U u="U" b="npack" /></div>
        <div className="w-[39px]">Post</div>
        <div className="w-[60px]"><U u="W" b="indow" /></div>
        <div>Help</div>
        <div className="ml-auto flex items-center mr-[5px]">
          <S w={8} h={8} className="mr-[7px]"><path d="M0 6.5h7" stroke="#000" strokeWidth="2" /></S>
          <S w={10} h={9} className="mr-[8px]"><rect x=".5" y="3.5" width="6" height="5" stroke="#000" /><path d="M3 2V.5h6v5H7" stroke="#000" /><path d="M1 4h6M3 1h6" stroke="#000" /></S>
          <S w={9} h={9}><path d="M1 1l7 7M8 1L1 8" stroke="#000" strokeWidth="1.8" /></S>
        </div>
      </div>
      <Toolbar />
      <SearchBars />
      <div className="h-[496px] shrink-0 flex">
        <LeftPanel />
        <RightPanel />
      </div>
      <div className="h-[19px] shrink-0 mt-[1px] border-y border-t-[#a8a8a8] border-b-[#b0b0b0] flex items-center pl-[4px]">
        <span className="text-[#222]">Task manager</span>
        <span className="ml-auto mr-[7px]"><Pin /></span>
        <span className="mr-[3px]"><XIc /></span>
      </div>
      <div className="h-[68px] shrink-0 mt-[4px] ml-[4px] mr-[3px] bg-white border-t-2 border-l-2 border-r-2 border-t-black border-l-black border-r-[#222]" />
      <BottomTabs />
      <div className="flex-1 min-h-0 border-t border-[#d4d4d4] mt-[1px] flex items-center pl-[2px] relative text-[11.1px]">
        <span>No active tasks</span>
        <span className="ml-[6px]">Database 640 KB allocated / 4.62 MB reserved</span>
        <span className="ml-[6px]">Disk 152.17 GB free</span>
        <div className="ml-auto w-[256px] h-[20px] border-l border-t border-[#c0c0c0]" />
        <div className="ml-[3px] w-[105px] h-[18px] bg-[#e6e6e6] border-t border-x border-[#bbb]" />
        <div className="ml-[31px] h-[20px] pl-[4px] w-[37px] border-l border-[#d8d8d8] flex items-center">NUM</div>
        <div className="h-[20px] pl-[3px] w-[54px] border-l border-[#d8d8d8] flex items-center">SCRL</div>
        <S w={10} h={10} className="absolute right-[1px] bottom-[1px]"><path d="M8 2h2v2H8zM5 5h2v2H5zM8 5h2v2H8zM2 8h2v2H2zM5 8h2v2H5zM8 8h2v2H8z" fill="#bbb" /></S>
      </div>
      <FileMenu />
      <SubMenu />
      <div className="absolute left-[81px] top-[200px] z-40 text-[29.4px] leading-[34px] font-bold text-white/25 font-['Liberation_Sans',Arial,sans-serif] pointer-events-none whitespace-nowrap">SOFTPEDIA</div>
    </div>
  );
}
